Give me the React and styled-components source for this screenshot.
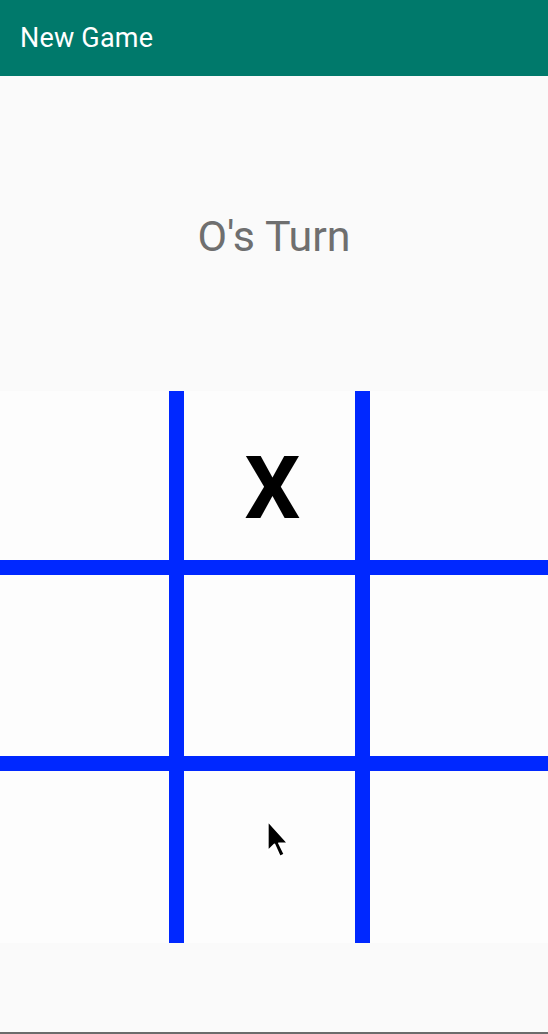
import React from 'react'
import styled, { createGlobalStyle } from 'styled-components'

const GlobalStyle = createGlobalStyle`
  html, body {
    margin: 0;
    padding: 0;
    background: #fafafa;
    font-family: Roboto, "Liberation Sans", sans-serif;
  }
`

const Screen = styled.div`
  width: 548px;
  height: 1034px;
  display: flex;
  flex-direction: column;
  background: #fafafa;
  overflow: hidden;
`

const Toolbar = styled.header`
  height: 76px;
  flex: none;
  background: #00796b;
  display: flex;
  align-items: center;
  padding: 0 20px 0;
  box-sizing: border-box;
`

const Title = styled.div`
  color: #ffffff;
  font-size: 27px;
  font-weight: 400;
  letter-spacing: 0.2px;
`

const Status = styled.div`
  height: 315px;
  flex: none;
  display: flex;
  align-items: center;
  justify-content: center;
  color: #6f6f6f;
  font-size: 43px;
  padding: 4px 0 0 0;
  box-sizing: border-box;
`

const Board = styled.div`
  position: relative;
  flex: none;
  height: 552px;
  display: grid;
  grid-template-columns: 169px 171px 178px;
  grid-template-rows: 169px 181px 172px;
  gap: 15px;
  background: #0028ff;
`

const Cell = styled.div`
  background: #fdfdfd;
  display: flex;
  align-items: center;
  justify-content: center;
  font-family: Roboto, "Liberation Sans", sans-serif;
  font-weight: 700;
  font-size: 88px;
  line-height: 1;
  color: #000;
  padding: 24px 0 0 6px;
  box-sizing: border-box;
`

const Cursor = styled.svg`
  position: absolute;
  left: 265px;
  top: 820px;
  pointer-events: none;
`

const Footer = styled.div`
  flex: 1;
  background: #fafafa;
  border-bottom: 2px solid #6b6b6b;
`

const cells = ['', 'X', '', '', '', '', '', '', '']

export default function App () {
  return (
    <Screen>
      <GlobalStyle />
      <Toolbar>
        <Title>New Game</Title>
      </Toolbar>
      <Status>O's Turn</Status>
      <Board>
        {cells.map((c, i) => <Cell key={i}>{c}</Cell>)}
      </Board>
      <Footer />
      <Cursor width='30' height='42' viewBox='0 0 26 38'>
        <path d='M2 1 L2 28 L8 22 L13 33 L17 31 L12 21 L20 21 Z' fill='#000' stroke='#fff' strokeWidth='1.5' strokeLinejoin='round' />
      </Cursor>
    </Screen>
  )
}
